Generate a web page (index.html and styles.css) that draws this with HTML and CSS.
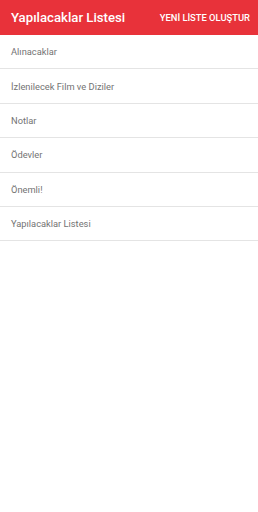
FILE: index.html
```html
<!DOCTYPE html>
<html lang="tr">
  <head>
    <meta charset="UTF-8" />
    <meta name="viewport" content="width=device-width, initial-scale=1.0" />
    <title>Yapılacaklar Listesi</title>
    <link rel="stylesheet" href="styles.css">
  </head>
  <body>
    <div class="toolbar">
      <h1 class="title">Yapılacaklar Listesi</h1>
      <button class="new-list">YENİ LİSTE OLUŞTUR</button>
    </div>

    <ul class="lists">
      <li class="list-item">Alınacaklar</li>
      <li class="list-item">İzlenilecek Film ve Diziler</li>
      <li class="list-item">Notlar</li>
      <li class="list-item">Ödevler</li>
      <li class="list-item">Önemli!</li>
      <li class="list-item">Yapılacaklar Listesi</li>
    </ul>
  </body>
</html>
```

FILE: styles.css
```css
body {
  font-family: Roboto, "Liberation Sans", sans-serif;
  margin: 0;
  background-color: #fff;
}

.toolbar {
  display: flex;
  align-items: center;
  justify-content: space-between;
  height: 35px;
  padding: 0 8px 0 11px;
  background-color: #e8323a;
  color: white;
}

.title {
  margin: 0;
  font-size: 13.2px;
  font-weight: 500;
}

.new-list {
  padding: 0;
  background: none;
  border: none;
  color: white;
  font-family: inherit;
  font-size: 9.4px;
  font-weight: 500;
}

.lists {
  list-style: none;
  margin: 0;
  padding: 0;
}

.list-item {
  display: flex;
  align-items: center;
  height: 33.4px;
  padding-left: 11px;
  border-bottom: 1px solid #e4e4e4;
  color: #737373;
  font-size: 9.3px;
}
```
